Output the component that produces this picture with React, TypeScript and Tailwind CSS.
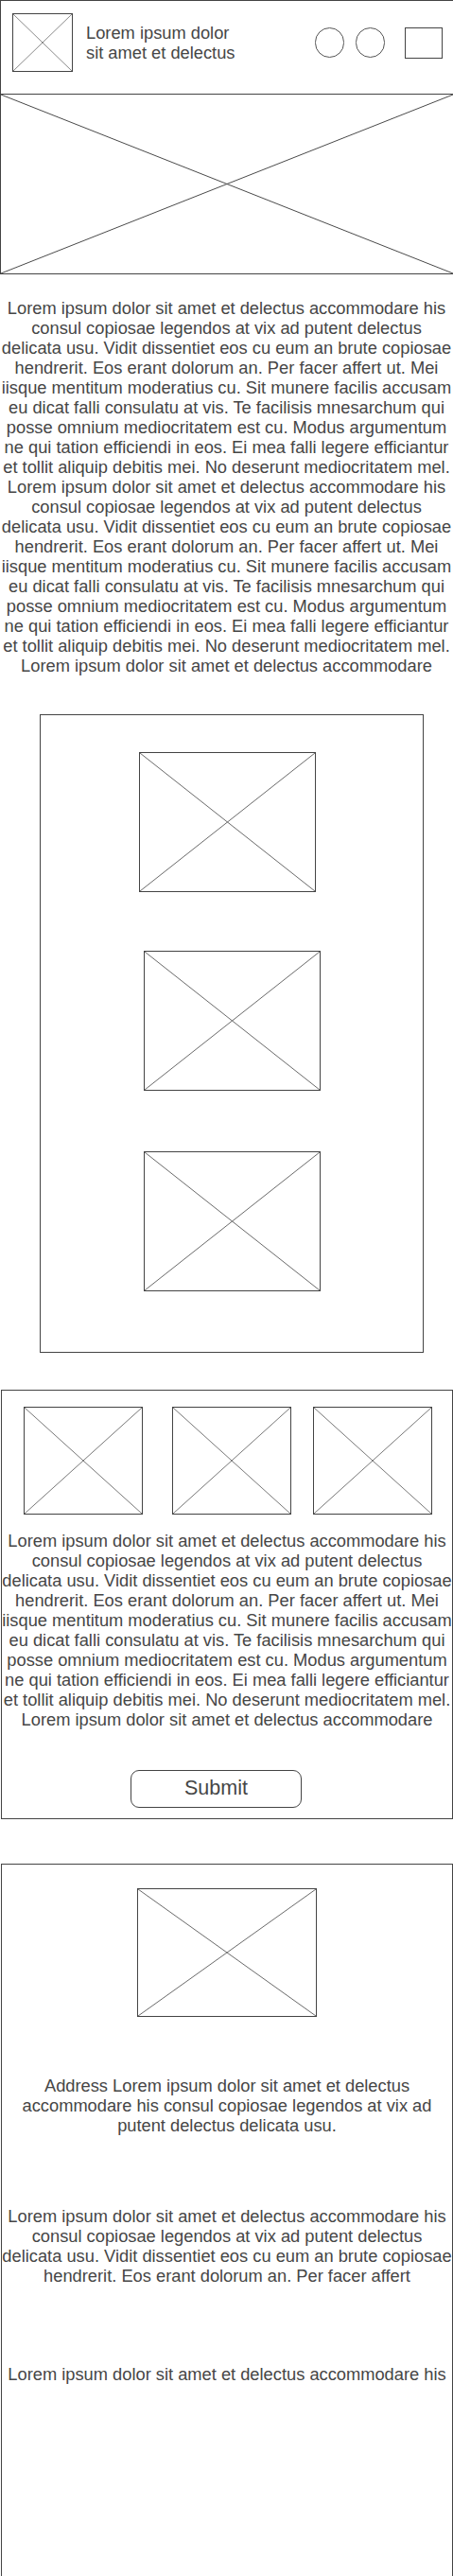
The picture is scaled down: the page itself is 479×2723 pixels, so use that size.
const lorem = [
  'Lorem ipsum dolor sit amet et delectus accommodare his',
  'consul copiosae legendos at vix ad putent delectus',
  'delicata usu. Vidit dissentiet eos cu eum an brute copiosae',
  'hendrerit. Eos erant dolorum an. Per facer affert ut. Mei',
  'iisque mentitum moderatius cu. Sit munere facilis accusam',
  'eu dicat falli consulatu at vis. Te facilisis mnesarchum qui',
  'posse omnium mediocritatem est cu. Modus argumentum',
  'ne qui tation efficiendi in eos. Ei mea falli legere efficiantur',
  'et tollit aliquip debitis mei. No deserunt mediocritatem mel.',
]

const address = [
  'Address Lorem ipsum dolor sit amet et delectus',
  'accommodare his consul copiosae legendos at vix ad',
  'putent delectus delicata usu.',
]

const shortText = [
  'Lorem ipsum dolor sit amet et delectus accommodare his',
  'consul copiosae legendos at vix ad putent delectus',
  'delicata usu. Vidit dissentiet eos cu eum an brute copiosae',
  'hendrerit. Eos erant dolorum an. Per facer affert',
]

function Lines({ lines, className = '' }: { lines: string[]; className?: string }) {
  return (
    <div className={`text-center text-[18.3px] leading-[21px] ${className}`}>
      {lines.map((line, i) => (
        <div key={i} className="whitespace-nowrap">
          {line}
        </div>
      ))}
    </div>
  )
}

function Placeholder({ className = '', stroke = '#6a6a6a' }: { className?: string; stroke?: string }) {
  return (
    <div className={`shrink-0 border border-[#444] ${className}`}>
      <svg className="block h-full w-full" viewBox="0 0 100 100" preserveAspectRatio="none">
        <line x1="0" y1="0" x2="100" y2="100" stroke={stroke} strokeWidth="1" vectorEffect="non-scaling-stroke" />
        <line x1="100" y1="0" x2="0" y2="100" stroke={stroke} strokeWidth="1" vectorEffect="non-scaling-stroke" />
      </svg>
    </div>
  )
}

export default function App() {
  return (
    <div className="flex h-[2723px] w-[479px] flex-col overflow-hidden bg-white font-['Liberation_Sans',Arial,sans-serif] text-[#464646]">
      {/* header */}
      <header className="flex h-[100px] shrink-0 items-start border-t border-b border-l border-[#444] pt-[13px] pr-[11px] pl-[12px]">
        <div className="flex h-[62px] w-full items-center">
          <Placeholder className="h-[62px] w-[64px]" stroke="#8a8a8a" />
          <div className="ml-[14px] text-[18.3px] leading-[21px]">
            <div>Lorem ipsum dolor</div>
            <div>sit amet et delectus</div>
          </div>
          <div className="ml-auto flex items-center">
            <div className="h-[32px] w-[31px] rounded-full border border-[#555]" />
            <div className="ml-[12px] h-[32px] w-[31px] rounded-full border border-[#555]" />
            <div className="ml-[21px] h-[33px] w-[40px] border border-[#444]" />
          </div>
        </div>
      </header>

      {/* hero */}
      <div className="h-[190px] shrink-0 border-b border-l border-[#444]">
        <svg className="block h-full w-full" viewBox="0 0 100 100" preserveAspectRatio="none">
          <line x1="0" y1="0" x2="100" y2="100" stroke="#4a4a4a" strokeWidth="1" vectorEffect="non-scaling-stroke" />
          <line x1="100" y1="0" x2="0" y2="100" stroke="#4a4a4a" strokeWidth="1" vectorEffect="non-scaling-stroke" />
        </svg>
      </div>

      <Lines className="mt-[25px] shrink-0" lines={[...lorem, ...lorem, 'Lorem ipsum dolor sit amet et delectus accommodare']} />

      {/* gallery */}
      <section className="mt-[41px] ml-[42px] flex w-[406px] shrink-0 flex-col items-center border border-[#444] pt-[39px] pb-[64px]">
        <Placeholder className="mr-[10px] h-[148px] w-[187px]" />
        <Placeholder className="mt-[62px] h-[148px] w-[187px]" />
        <Placeholder className="mt-[64px] h-[148px] w-[187px]" />
      </section>

      {/* form */}
      <section className="mt-[39px] ml-[1px] flex w-[478px] shrink-0 flex-col border border-[#444] pt-[17px] pb-[11px]">
        <div className="flex pl-[23px]">
          <Placeholder className="h-[114px] w-[126px]" stroke="#777" />
          <Placeholder className="ml-[31px] h-[114px] w-[126px]" stroke="#777" />
          <Placeholder className="ml-[23px] h-[114px] w-[126px]" stroke="#777" />
        </div>
        <Lines className="mt-[17px]" lines={[...lorem, 'Lorem ipsum dolor sit amet et delectus accommodare']} />
        <button className="mt-[43px] ml-[136px] flex h-[40px] w-[181px] items-center justify-center rounded-[9px] border border-[#444] text-[21.5px] leading-none">
          Submit
        </button>
      </section>

      {/* contact */}
      <section className="mt-[47px] ml-[1px] flex w-[478px] min-h-0 flex-1 flex-col border-x border-t border-[#444] pt-[25px]">
        <Placeholder className="mx-auto h-[136px] w-[190px]" />
        <Lines className="mt-[62px]" lines={address} />
        <Lines className="mt-[75px]" lines={shortText} />
        <Lines className="mt-[83px]" lines={['Lorem ipsum dolor sit amet et delectus accommodare his']} />
      </section>
    </div>
  )
}
